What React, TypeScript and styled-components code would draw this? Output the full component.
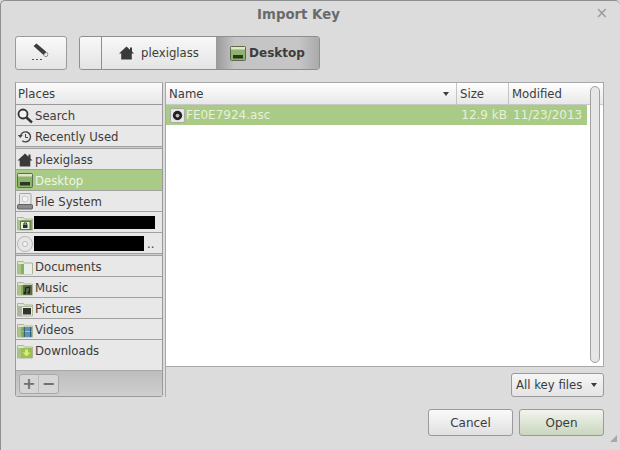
import styled, { createGlobalStyle } from 'styled-components';

const GlobalStyle = createGlobalStyle`
  html, body {
    margin: 0;
    padding: 0;
    background: #dcdcdc;
  }
  * {
    box-sizing: border-box;
  }
`;

type FolderKind = 'docs' | 'music' | 'pictures' | 'videos' | 'downloads' | 'lock';

function Folder({ kind }: { kind: FolderKind }) {
  const body = kind === 'downloads' ? '#9cc04f' : kind === 'lock' ? '#7fa35c' : '#8aad63';
  return (
    <svg width="16" height="16" viewBox="0 0 16 16">
      <path d="M.5 2.500h6l1 1.500h8v11H.5z" fill="#dfe6d4" stroke="#a9b89a" />
      <rect x="1" y="5" width="14" height="10" fill={body} />
      <rect x="1" y="5" width="3" height="10" fill="#a9c585" />
      {kind === 'docs' && <rect x="7" y="5" width="8" height="10" fill="#e9eee8" />}
      {kind === 'music' && (
        <>
          <rect x="6" y="5" width="9" height="10" fill="#5b6a47" />
          <path d="M8.500 13V8l4-1v5" fill="none" stroke="#1f2419" strokeWidth="1.200" />
          <circle cx="7.800" cy="13" r="1.200" fill="#1f2419" />
          <circle cx="11.800" cy="12.500" r="1.200" fill="#1f2419" />
        </>
      )}
      {kind === 'pictures' && (
        <>
          <rect x="1" y="5" width="14" height="10" fill="#aab79c" />
          <rect x="5.500" y="6.500" width="9" height="7.500" fill="#34342f" stroke="#e8e8e8" />
        </>
      )}
      {kind === 'videos' && (
        <>
          <rect x="6" y="5" width="9" height="10" fill="#5b93b5" />
          <path d="M6 9.500h9" stroke="#9fc3d6" />
          <path d="M7.500 5v10M13.500 5v10" stroke="#35637f" />
        </>
      )}
      {kind === 'downloads' && <path d="M8 6.500v3H5.500l4 4 4-4H11v-3z" fill="#d9e97c" />}
      {kind === 'lock' && (
        <>
          <rect x="3.500" y="6.500" width="9.500" height="8" fill="#e9efe0" stroke="#5f7748" />
          <rect x="6" y="9.500" width="4.500" height="3.500" fill="#2e2e2e" />
          <path d="M7 9.500V8h2.500v1.500" fill="none" stroke="#2e2e2e" />
        </>
      )}
    </svg>
  );
}

function HomeIcon() {
  return (
    <svg width="15" height="14" viewBox="0 0 15 14">
      <path d="M7.500.5 11 3.700V1.500h2v4l2 2h-2.200V13.500H2.200V7.500H0z" fill="#3a3a3a" />
    </svg>
  );
}

function DesktopIcon() {
  return (
    <svg width="16" height="15" viewBox="0 0 16 15">
      <rect x=".5" y=".5" width="15" height="14" rx="1" fill="#8fb36a" stroke="#5c6b4c" />
      <rect x="1" y="1" width="14" height="2.500" fill="#dce6cd" />
      <rect x="3" y="9" width="10" height="3.500" fill="#2c3626" />
    </svg>
  );
}

export default function App() {
  return (
    <Window>
      <GlobalStyle />
      <TitleBar>
        <Title>Import Key</Title>
        <CloseMark>×</CloseMark>
      </TitleBar>
      <Toolbar>
        <EditButton aria-label="Type a file name">
          <svg width="20" height="20" viewBox="0 0 20 20">
            <path d="M2.500 3 5.500.5l10 8.500-3 3z" fill="#3d3d3d" />
            <path d="m12.500 12 3-3 1.500 2-.8 2.300-2.200.3z" fill="#efefef" stroke="#777" strokeWidth=".8" />
            <path d="M1 16.500h2M5 16.500h2M9 16.500h2" stroke="#555" strokeWidth="1.200" />
          </svg>
        </EditButton>
        <PathBar>
          <PathLead />
          <PathSegment>
            <HomeIcon />
            plexiglass
          </PathSegment>
          <PathSegment $active>
            <DesktopIcon />
            Desktop
          </PathSegment>
        </PathBar>
      </Toolbar>
      <Main>
        <Sidebar>
          <PlacesHead>Places</PlacesHead>
          <PlaceRow>
            <svg width="16" height="16" viewBox="0 0 16 16">
              <circle cx="6" cy="6" r="4.500" fill="#f4f4f4" stroke="#333" strokeWidth="1.800" />
              <path d="m9.500 9.500 5.500 5" stroke="#333" strokeWidth="2.400" />
            </svg>
            Search
          </PlaceRow>
          <PlaceRow>
            <svg width="16" height="16" viewBox="0 0 16 16">
              <path d="M3.500 7.500a5 5 0 1 1 1.800 4.200" fill="none" stroke="#444" strokeWidth="1.400" />
              <path d="M.8 6h5L3.300 9z" fill="#444" />
              <path d="M8.500 5v3.500H11" fill="none" stroke="#444" />
            </svg>
            Recently Used
          </PlaceRow>
          <Divider />
          <PlaceRow>
            <HomeIcon />
            plexiglass
          </PlaceRow>
          <PlaceRow $selected>
            <DesktopIcon />
            Desktop
          </PlaceRow>
          <PlaceRow>
            <svg width="16" height="17" viewBox="0 0 16 17">
              <rect x="2.500" y=".5" width="11.500" height="11" rx="1" fill="#e9e9e9" stroke="#a5a5a5" />
              <circle cx="8" cy="6" r="3" fill="#f4f4f4" stroke="#c9c9c9" />
              <rect x=".5" y="11.500" width="15" height="4.500" rx="1" fill="#8c8c8c" stroke="#616161" />
            </svg>
            File System
          </PlaceRow>
          <PlaceRow>
            <Folder kind="lock" />
            <Redacted $width={121} $height={13} />
          </PlaceRow>
          <PlaceRow>
            <svg width="16" height="16" viewBox="0 0 16 16">
              <circle cx="8" cy="8" r="7.500" fill="#e6e6e6" stroke="#b5b5b5" />
              <circle cx="8" cy="8" r="2.500" fill="#f5f5f5" stroke="#bbb" />
            </svg>
            <Redacted $width={110} $height={15} />
            <Ellipsis>..</Ellipsis>
          </PlaceRow>
          <Divider />
          <PlaceRow>
            <Folder kind="docs" />
            Documents
          </PlaceRow>
          <PlaceRow>
            <Folder kind="music" />
            Music
          </PlaceRow>
          <PlaceRow>
            <Folder kind="pictures" />
            Pictures
          </PlaceRow>
          <PlaceRow>
            <Folder kind="videos" />
            Videos
          </PlaceRow>
          <PlaceRow $last>
            <Folder kind="downloads" />
            Downloads
          </PlaceRow>
          <SidebarSpace />
          <SidebarFooter>
            <AddRemove>
              <AddRemoveButton>+</AddRemoveButton>
              <AddRemoveButton>−</AddRemoveButton>
            </AddRemove>
          </SidebarFooter>
        </Sidebar>
        <PaneGrip />
        <FileColumn>
          <FilePane>
            <Columns>
              <NameHead>
                Name
                <SortArrow />
              </NameHead>
              <SizeHead>Size</SizeHead>
              <ModifiedHead>Modified</ModifiedHead>
            </Columns>
            <FileRow>
              <NameCell>
                <svg width="15" height="15" viewBox="0 0 16 16">
                  <rect x=".5" y=".5" width="15" height="15" rx="2" fill="#e8e8e8" stroke="#a5a5a5" />
                  <circle cx="8" cy="8" r="5" fill="#222" />
                  <circle cx="8" cy="8" r="2" fill="#bbb" />
                </svg>
                FE0E7924.asc
              </NameCell>
              <SizeCell>12.9 kB</SizeCell>
              <ModifiedCell>11/23/2013</ModifiedCell>
            </FileRow>
            <ScrollThumb />
          </FilePane>
          <FilterRow>
            <FilterButton>
              All key files
              <SortArrow />
            </FilterButton>
          </FilterRow>
        </FileColumn>
      </Main>
      <Actions>
        <ActionButton>Cancel</ActionButton>
        <ActionButton $primary>Open</ActionButton>
        <ResizeGrip />
      </Actions>
    </Window>
  );
}

const Window = styled.div`
  display: flex;
  flex-direction: column;
  width: 620px;
  height: 450px;
  overflow: hidden;
  background: #dcdcdc;
  border-left: 1px solid #8f8f8f;
  border-top: 1px solid #8f8f8f;
  border-radius: 5px 5px 0 0;
  font-family: 'DejaVu Sans', sans-serif;
  font-size: 11.7px;
  color: #3c3c3c;
`;

const TitleBar = styled.div`
  position: relative;
  display: flex;
  align-items: center;
  justify-content: center;
  height: 26px;
  padding-right: 24px;
  flex: none;
`;

const Title = styled.div`
  font-weight: bold;
  font-size: 13.3px;
  color: #6a6a6a;
`;

const CloseMark = styled.div`
  position: absolute;
  right: 12px;
  top: 3px;
  font-size: 15px;
  color: #9a9a9a;
`;

const Toolbar = styled.div`
  display: flex;
  gap: 12px;
  height: 34px;
  margin: 9px 0 0 14px;
  flex: none;
`;

const EditButton = styled.button`
  display: flex;
  align-items: center;
  justify-content: center;
  width: 52px;
  padding: 0;
  border: 1px solid #9a9a9a;
  border-radius: 3px;
  background: linear-gradient(#fafafa, #e4e4e4);
`;

const PathBar = styled.div`
  display: flex;
  border: 1px solid #8f8f8f;
  border-radius: 3px;
  overflow: hidden;
`;

const PathLead = styled.div`
  width: 22px;
  border-right: 1px solid #8f8f8f;
  background: linear-gradient(#f8f8f8, #e4e4e4);
`;

const PathSegment = styled.div<{ $active?: boolean }>`
  display: flex;
  align-items: center;
  justify-content: center;
  gap: ${p => (p.$active ? '3px' : '7px')};
  width: ${p => (p.$active ? '103px' : '114px')};
  font-weight: ${p => (p.$active ? 'bold' : 'normal')};
  font-size: ${p => (p.$active ? '12px' : '11.7px')};
  background: ${p =>
    p.$active
      ? 'linear-gradient(90deg, #9a9a9a, #c4c4c4 18%, #c6c6c6 80%, #aaa)'
      : 'linear-gradient(#f8f8f8, #e4e4e4)'};
`;

const Main = styled.div`
  display: flex;
  height: 315px;
  margin: 12px 0 0 14px;
  flex: none;
`;

const Sidebar = styled.div`
  display: flex;
  flex-direction: column;
  width: 148px;
  flex: none;
  border: 1px solid #9a9a9a;
  border-top-color: #b5b5b5;
  border-radius: 0 0 3px 3px;
  background: #e8e8e8;
`;

const PlacesHead = styled.div`
  display: flex;
  align-items: center;
  height: 22px;
  flex: none;
  padding-left: 2px;
  background: linear-gradient(#fafafa, #e8e8e8);
  border-bottom: 1px solid #9a9a9a;
`;

const PlaceRow = styled.div<{ $selected?: boolean; $last?: boolean }>`
  display: flex;
  align-items: center;
  gap: 2px;
  height: 21px;
  flex: none;
  padding: ${p => (p.$last ? '0' : '1px')} 0 0 1px;
  white-space: nowrap;
  border-bottom: ${p => (p.$last ? 'none' : '1px solid #a0a0a0')};
  background: ${p => (p.$selected ? '#a9cb85' : 'transparent')};
  color: ${p => (p.$selected ? '#eef5e4' : 'inherit')};

  > svg {
    flex: 0 0 16px;
  }
`;

const Redacted = styled.span<{ $width: number; $height: number }>`
  display: inline-block;
  width: ${p => p.$width}px;
  height: ${p => p.$height}px;
  margin-left: -1px;
  background: #000;
`;

const Ellipsis = styled.span`
  margin-left: 1px;
`;

const Divider = styled.div`
  height: 2px;
  flex: none;
  background: #cfcfcf;
  border-bottom: 1px solid #a0a0a0;
`;

const SidebarSpace = styled.div`
  flex: 1;
`;

const SidebarFooter = styled.div`
  display: flex;
  align-items: center;
  height: 26px;
  flex: none;
  padding-left: 3px;
  background: linear-gradient(#bdbdbd, #cfcfcf);
  border-top: 1px solid #a8a8a8;
`;

const AddRemove = styled.div`
  display: flex;
  height: 20px;
  border: 1px solid #a8a8a8;
  border-radius: 3px;
  background: #d6d6d6;
`;

const AddRemoveButton = styled.div`
  display: flex;
  align-items: center;
  justify-content: center;
  width: 19px;
  font-size: 16px;
  font-weight: bold;
  color: #707070;
  &:first-child {
    border-right: 1px solid #bcbcbc;
  }
`;

const PaneGrip = styled.div`
  width: 3px;
  height: 315px;
  flex: none;
  border-right: 1px solid #a8a8a8;
`;

const FileColumn = styled.div`
  display: flex;
  flex-direction: column;
  width: 438px;
  flex: none;
`;

const FilePane = styled.div`
  position: relative;
  height: 285px;
  flex: none;
  background: #fff;
  border: 1px solid #a8a8a8;
  border-left: none;
`;

const Columns = styled.div`
  display: flex;
  height: 22px;
  background: linear-gradient(#fff, #e8e8e8);
  border-bottom: 1px solid #c8c8c8;
`;

const NameHead = styled.div`
  display: flex;
  align-items: center;
  justify-content: space-between;
  width: 291px;
  padding: 0 7px 0 3px;
  border-right: 1px solid #c4c4c4;
`;

const SizeHead = styled.div`
  display: flex;
  align-items: center;
  width: 52px;
  padding-left: 3px;
  border-right: 1px solid #c4c4c4;
`;

const ModifiedHead = styled.div`
  display: flex;
  align-items: center;
  padding-left: 3px;
`;

const SortArrow = styled.span`
  display: inline-block;
  border-left: 3.5px solid transparent;
  border-right: 3.5px solid transparent;
  border-top: 4px solid #3c3c3c;
`;

const FileRow = styled.div`
  display: flex;
  align-items: center;
  width: 421px;
  height: 20px;
  font-size: 12px;
  background: #a9cb85;
  color: #e6f0da;
`;

const NameCell = styled.div`
  display: flex;
  align-items: center;
  gap: 1px;
  width: 289px;
  padding-left: 4px;
`;

const SizeCell = styled.div`
  width: 52px;
  text-align: right;
`;

const ModifiedCell = styled.div`
  flex: 1;
  padding-left: 6px;
  white-space: nowrap;
`;

const ScrollThumb = styled.div`
  position: absolute;
  top: 3px;
  right: 3px;
  bottom: 3px;
  width: 10px;
  border: 1px solid #a0a0a0;
  border-radius: 5px;
  background: #e6e6e6;
`;

const FilterRow = styled.div`
  display: flex;
  justify-content: flex-end;
  margin-top: 6px;
`;

const FilterButton = styled.div`
  display: flex;
  align-items: center;
  justify-content: space-between;
  width: 93px;
  height: 24px;
  padding: 0 6px 0 4px;
  border: 1px solid #9a9a9a;
  border-radius: 3px;
  background: linear-gradient(#f6f6f6, #e4e4e4);
`;

const Actions = styled.div`
  position: relative;
  display: flex;
  justify-content: flex-end;
  gap: 6px;
  margin: 12px 16px 0 0;
`;

const ActionButton = styled.div<{ $primary?: boolean }>`
  display: flex;
  align-items: center;
  justify-content: center;
  width: 85px;
  height: 27px;
  font-size: 12px;
  border: 1px solid #9a9a9a;
  border-radius: 3px;
  background: ${p =>
    p.$primary ? 'linear-gradient(#f2f4ee, #c9d6bd)' : 'linear-gradient(#fafafa, #e0e0e0)'};
`;

const ResizeGrip = styled.div`
  position: absolute;
  right: -13px;
  top: 26px;
  width: 0;
  height: 0;
  border-left: 7px solid transparent;
  border-bottom: 7px solid #a8a8a8;
`;
